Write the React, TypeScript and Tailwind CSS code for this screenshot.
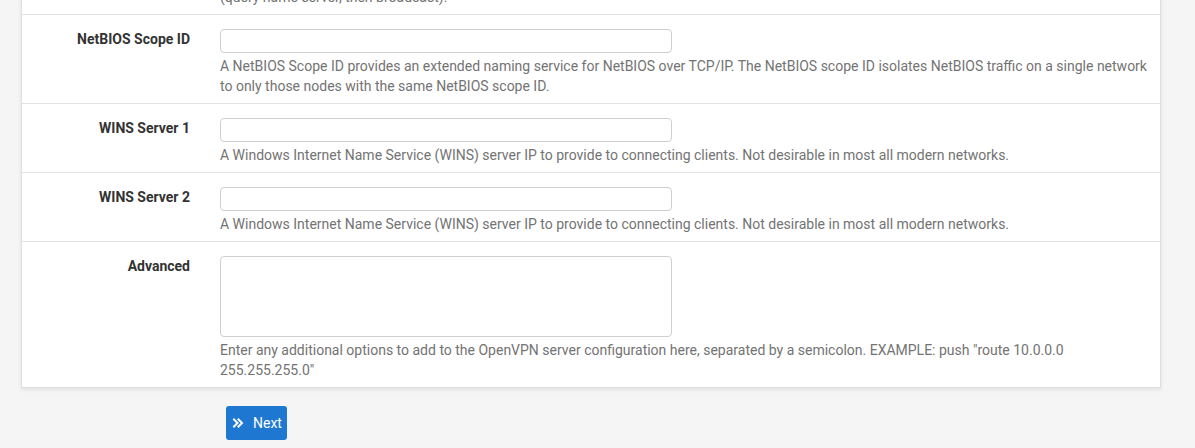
import React from "react";

const font = { fontFamily: "Roboto, 'Liberation Sans', sans-serif" };

function Row({
  label,
  help,
  textarea,
}: {
  label: string;
  help: React.ReactNode;
  textarea?: boolean;
}) {
  return (
    <div className="flex border-t border-[#e3e3e3] pt-[14px] pb-[7px]">
      <div className="w-[168px] shrink-0 text-right text-[14px] font-bold text-[#333] leading-[20px]">
        {label}
      </div>
      <div className="ml-[30px] w-[938px]">
        {textarea ? (
          <textarea className="block w-[452px] h-[81px] border border-[#cfcfcf] rounded-[4px] bg-white resize-none outline-none" />
        ) : (
          <input
            type="text"
            className="block w-[452px] h-[24px] border border-[#cfcfcf] rounded-[4px] bg-white outline-none"
          />
        )}
        <p className="mt-[3px] text-[14px] leading-[20px] text-[#737373]">{help}</p>
      </div>
    </div>
  );
}

export default function App() {
  return (
    <div className="min-h-[448px] bg-[#f5f5f5] overflow-hidden" style={font}>
      <div className="ml-[21px] w-[1140px] mt-[-20px] bg-white border-x border-b border-[#dedede] shadow-[0_2px_4px_rgba(0,0,0,0.08)]">
        <div className="flex pb-[7px]">
          <div className="ml-[198px] text-[14px] leading-[20px] text-[#737373] pt-[7px]">
            (query name server, then broadcast).
          </div>
        </div>
        <Row
          label="NetBIOS Scope ID"
          help="A NetBIOS Scope ID provides an extended naming service for NetBIOS over TCP/IP. The NetBIOS scope ID isolates NetBIOS traffic on a single network to only those nodes with the same NetBIOS scope ID."
        />
        <Row
          label="WINS Server 1"
          help="A Windows Internet Name Service (WINS) server IP to provide to connecting clients. Not desirable in most all modern networks."
        />
        <Row
          label="WINS Server 2"
          help="A Windows Internet Name Service (WINS) server IP to provide to connecting clients. Not desirable in most all modern networks."
        />
        <Row
          label="Advanced"
          textarea
          help={'Enter any additional options to add to the OpenVPN server configuration here, separated by a semicolon. EXAMPLE: push "route 10.0.0.0 255.255.255.0"'}
        />
      </div>
      <div className="pl-[226px] pt-[18px]">
        <button className="flex items-center gap-[9px] h-[34px] w-[61px] pl-[6px] rounded-[3px] bg-[#1e78d2] text-white text-[14px]">
          <svg width="12" height="12" viewBox="0 0 12 12" fill="none" stroke="white" strokeWidth="2" strokeLinecap="square">
            <path d="M2 2.5l3.5 3.5L2 9.5M6.5 2.5L10 6l-3.5 3.5" />
          </svg>
          <span>Next</span>
        </button>
      </div>
    </div>
  );
}
